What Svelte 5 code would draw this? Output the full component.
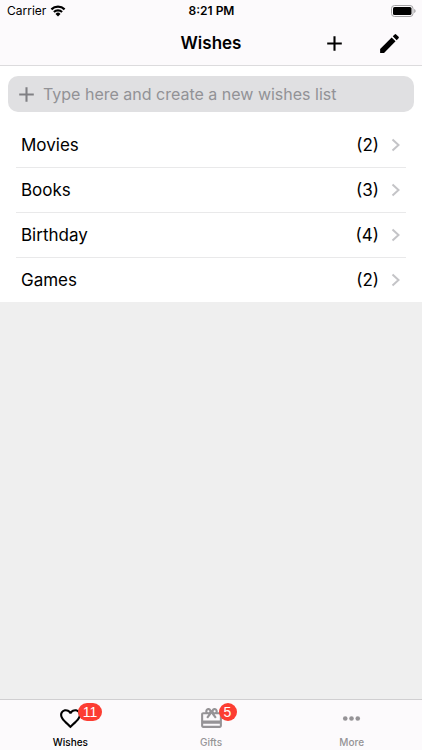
<script>
  let lists = $state([
    { name: 'Movies', count: 2 },
    { name: 'Books', count: 3 },
    { name: 'Birthday', count: 4 },
    { name: 'Games', count: 2 },
  ]);
  let tabs = [
    { id: 'wishes', label: 'Wishes', badge: 11 },
    { id: 'gifts', label: 'Gifts', badge: 5 },
    { id: 'more', label: 'More', badge: 0 },
  ];
  let active = $state('wishes');
  let draft = $state('');
  let input;

  function addList(e) {
    e.preventDefault();
    const name = draft.trim();
    if (!name) return;
    lists.push({ name, count: 0 });
    draft = '';
  }
</script>

<div class="app">
  <header>
    <div class="status">
      <div class="carrier">
        <span>Carrier</span>
        <svg width="16" height="12" viewBox="0 0 16 12" aria-hidden="true">
          <path d="M1.400 4.400a9.400 9.400 0 0 1 13.200 0" fill="none" stroke="#000" stroke-width="2.200" />
          <path d="M3.900 7.100a5.800 5.800 0 0 1 8.200 0" fill="none" stroke="#000" stroke-width="2.100" />
          <path d="M8 11.600 5.500 8.900a3.500 3.500 0 0 1 5 0z" />
        </svg>
      </div>
      <span class="time">8:21 PM</span>
      <svg class="battery" width="25" height="12" viewBox="0 0 25 12" aria-hidden="true">
        <rect x="0.5" y="0.5" width="21.500" height="11" rx="3" fill="none" stroke="#a3a2a4" />
        <rect x="2" y="2" width="18.500" height="8" rx="1.600" />
        <path d="M23.200 4v4c.8-.3 1.400-1.100 1.400-2s-.6-1.700-1.400-2z" fill="#a3a2a4" />
      </svg>
    </div>
    <div class="nav">
      <h1>Wishes</h1>
      <div class="actions">
        <button aria-label="Add list" onclick={() => input.focus()}>
          <svg width="25" height="25" viewBox="0 0 24 24"><path d="M19 13h-6v6h-2v-6H5v-2h6V5h2v6h6v2z" /></svg>
        </button>
        <button aria-label="Edit lists">
          <svg width="25" height="25" viewBox="0 0 24 24"><path d="M3 17.250V21h3.750L17.810 9.940l-3.750-3.750L3 17.250zM20.710 7.040a1 1 0 0 0 0-1.410l-2.340-2.340a1 1 0 0 0-1.410 0l-1.830 1.830 3.750 3.750 1.830-1.830z" /></svg>
        </button>
      </div>
    </div>
  </header>

  <main>
    <div class="panel">
      <form class="new-list" onsubmit={addList}>
        <svg width="25" height="25" viewBox="0 0 24 24" aria-hidden="true"><path d="M19 13h-6v6h-2v-6H5v-2h6V5h2v6h6v2z" /></svg>
        <input bind:this={input} bind:value={draft} type="text" aria-label="New wishes list" placeholder="Type here and create a new wishes list" />
      </form>
      <ul>
        {#each lists as list}
          <li>
            <button class="row">
              <span class="name">{list.name}</span>
              <span>({list.count})</span>
              <svg width="10" height="14" viewBox="0 0 10 14" aria-hidden="true"><path d="M1.500 1.500 7.500 7l-6 5.500" /></svg>
            </button>
          </li>
        {/each}
      </ul>
    </div>
  </main>

  <nav class="tabs">
    {#each tabs as tab}
      <button class="tab" class:active={active === tab.id} onclick={() => (active = tab.id)}>
        <span class="icon">
          <svg width="25" height="25" viewBox="0 0 24 24" aria-hidden="true">
            {#if tab.id === 'wishes'}
              <path d="M16.500 3c-1.740 0-3.410.81-4.500 2.090C10.910 3.810 9.240 3 7.500 3 4.420 3 2 5.420 2 8.500c0 3.780 3.400 6.860 8.550 11.540L12 21.350l1.450-1.320C18.600 15.360 22 12.280 22 8.500 22 5.420 19.580 3 16.500 3zm-4.400 15.550-.1.100-.1-.1C7.140 14.240 4 11.390 4 8.500 4 6.500 5.500 5 7.500 5c1.540 0 3.040.99 3.570 2.360h1.870C13.460 5.990 14.960 5 16.500 5c2 0 3.500 1.500 3.500 3.500 0 2.890-3.140 5.740-7.900 10.050z" />
            {:else if tab.id === 'gifts'}
              <path d="M20 6h-2.180c.11-.31.180-.65.180-1 0-1.660-1.340-3-3-3-1.050 0-1.960.54-2.500 1.350l-.5.670-.5-.680C10.960 2.540 10.050 2 9 2 7.340 2 6 3.340 6 5c0 .35.070.69.180 1H4c-1.110 0-1.990.89-1.990 2L2 19c0 1.110.89 2 2 2h16c1.110 0 2-.89 2-2V8c0-1.110-.89-2-2-2zm-5-2c.55 0 1 .45 1 1s-.45 1-1 1-1-.45-1-1 .45-1 1-1zM9 4c.55 0 1 .45 1 1s-.45 1-1 1-1-.45-1-1 .45-1 1-1zm11 15H4v-2h16v2zm0-5H4V8h5.080L7 10.830 8.620 12 11 8.760l1-1.360 1 1.360L15.380 12 17 10.830 14.920 8H20v6z" />
            {:else}
              <circle cx="6" cy="12" r="2.200" />
              <circle cx="12" cy="12" r="2.200" />
              <circle cx="18" cy="12" r="2.200" />
            {/if}
          </svg>
          {#if tab.badge}
            <span class="badge">{tab.badge}</span>
          {/if}
        </span>
        <span class="label">{tab.label}</span>
      </button>
    {/each}
  </nav>
</div>

<style>
  :global(body) {
    margin: 0;
    background: #efefef;
  }
  .app {
    min-height: 100vh;
    display: flex;
    flex-direction: column;
    font-family: Inter, 'Liberation Sans', sans-serif;
    color: #000;
  }
  button {
    padding: 0;
    border: none;
    background: none;
    font: inherit;
    color: inherit;
    cursor: pointer;
  }
  svg { display: block; }

  header {
    background: #fcfafc;
    border-bottom: 1px solid #dcdbdd;
  }
  .status {
    display: grid;
    grid-template-columns: 1fr auto 1fr;
    align-items: center;
    height: 21px;
    padding: 0 6px 0 7px;
    font-size: 12px;
  }
  .carrier {
    display: flex;
    align-items: center;
    gap: 4px;
  }
  .time { font-weight: 600; }
  .battery { justify-self: end; }

  .nav {
    display: grid;
    grid-template-columns: 1fr auto 1fr;
    align-items: center;
    height: 44px;
    padding: 0 20px;
  }
  h1 {
    grid-column: 2;
    margin: 0;
    font-size: 17px;
    font-weight: 600;
  }
  .actions {
    display: flex;
    align-items: center;
    justify-content: flex-end;
    gap: 30px;
  }

  main { flex: 1; }
  .panel {
    background: #fff;
    padding-top: 10px;
  }
  .new-list {
    display: flex;
    align-items: center;
    gap: 4px;
    height: 36px;
    margin: 0 8px 11px;
    padding: 0 6px;
    border-radius: 10px;
    background: #e0e0e2;
  }
  .new-list svg { fill: #808084; }
  .new-list input {
    flex: 1;
    min-width: 0;
    padding: 0;
    border: none;
    outline: none;
    background: none;
    font: inherit;
    font-size: 16px;
  }
  .new-list input::placeholder {
    color: #929296;
    opacity: 1;
  }

  ul {
    margin: 0;
    padding: 0 16px;
    list-style: none;
  }
  li + li { border-top: 1px solid #e9e9ea; }
  .row {
    display: flex;
    align-items: center;
    width: 100%;
    height: 44px;
    padding: 0 5px;
    font-size: 17px;
    text-align: left;
  }
  .name { flex: 1; }
  .row svg {
    margin-left: 12px;
    fill: none;
    stroke: #c4c4c7;
    stroke-width: 2;
  }

  .tabs {
    position: sticky;
    bottom: 0;
    display: flex;
    height: 50px;
    border-top: 1px solid #d0cfd1;
    background: #fcfafc;
  }
  .tab {
    flex: 1;
    display: flex;
    flex-direction: column;
    align-items: center;
    justify-content: flex-end;
    gap: 4px;
    padding-bottom: 1px;
    color: #959396;
    fill: #959396;
  }
  .tab.active {
    color: #000;
    fill: #000;
  }
  .icon { position: relative; }
  .badge {
    position: absolute;
    top: -3px;
    left: 20px;
    box-sizing: border-box;
    min-width: 18px;
    height: 18px;
    padding: 0 5px;
    border-radius: 9px;
    background: #fc3d32;
    color: #fff;
    font-family: 'Liberation Sans', sans-serif;
    font-size: 14px;
    line-height: 18px;
  }
  .label {
    font-size: 10px;
    line-height: 14px;
    font-weight: 500;
  }
</style>
